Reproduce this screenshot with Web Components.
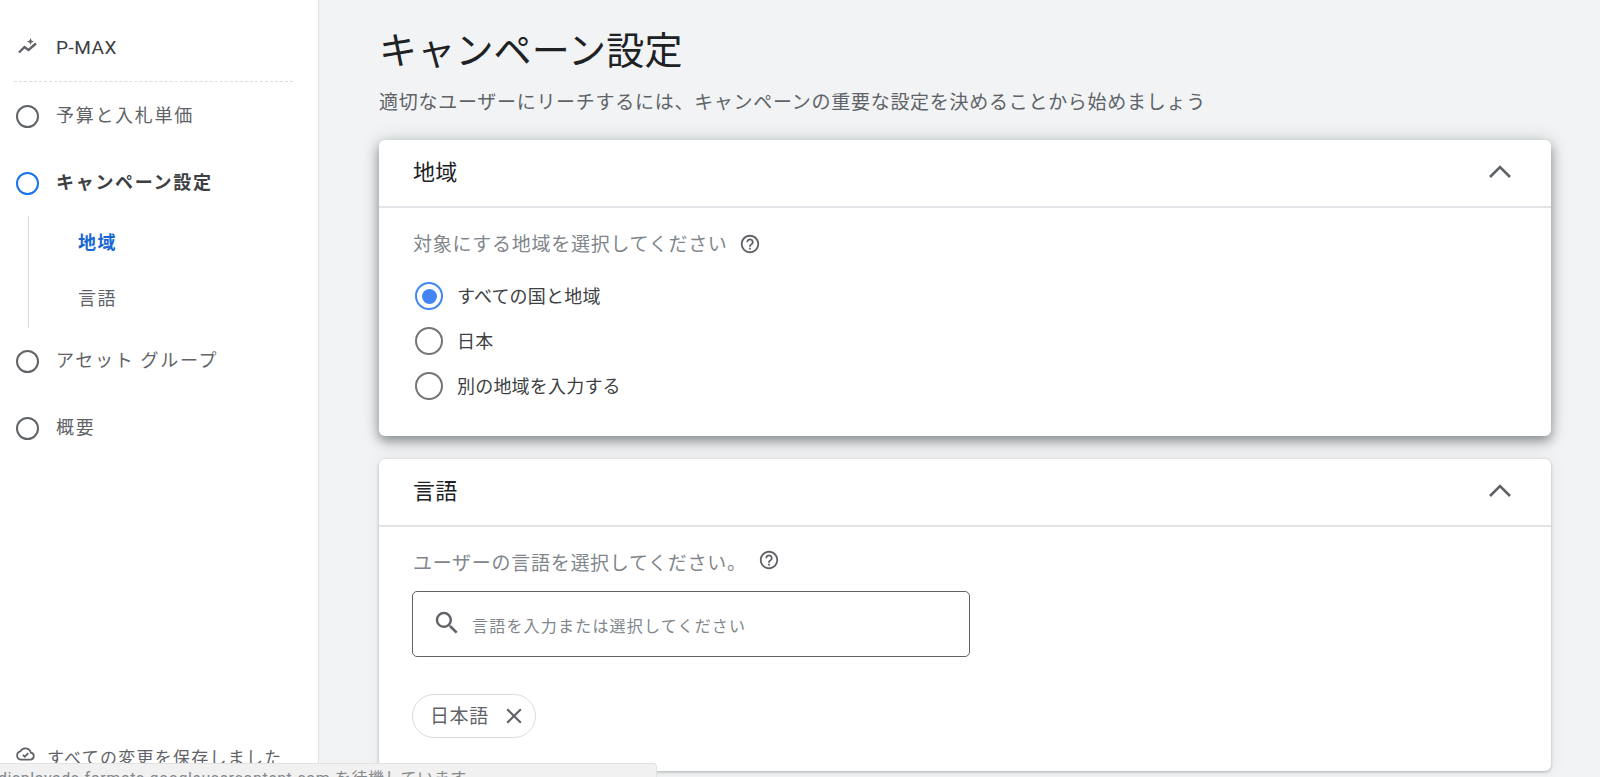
<!DOCTYPE html>
<html lang="ja">
<head>
<meta charset="utf-8">
<title>キャンペーン設定</title>
<style>
  html, body { margin: 0; height: 100%; overflow: hidden; }
  body {
    background: #f1f3f4;
    font-family: Roboto, "Noto Sans CJK JP", sans-serif;
    color: #3c4043;
    display: flex;
  }
</style>
</head>
<body>
  <campaign-sidebar>
    <nav-step slot="steps" state="idle" style="height:68px">予算と入札単価</nav-step>
    <nav-step slot="steps" state="active" style="height:66px">キャンペーン設定</nav-step>
    <sub-steps slot="steps">
      <sub-step active>地域</sub-step>
      <sub-step>言語</sub-step>
    </sub-steps>
    <nav-step slot="steps" state="idle" style="height:66px">アセット グループ</nav-step>
    <nav-step slot="steps" state="idle" style="height:68px">概要</nav-step>
  </campaign-sidebar>

  <main-panel heading="キャンペーン設定" sub="適切なユーザーにリーチするには、キャンペーンの重要な設定を決めることから始めましょう">
    <settings-card heading="地域" raised style="height:296px">
      <field-label>対象にする地域を選択してください</field-label>
      <radio-group>
        <radio-option checked>すべての国と地域</radio-option>
        <radio-option>日本</radio-option>
        <radio-option>別の地域を入力する</radio-option>
      </radio-group>
    </settings-card>
    <settings-card heading="言語" style="height:312px">
      <field-label style="--help-lift:6px">ユーザーの言語を選択してください。</field-label>
      <search-input placeholder="言語を入力または選択してください"></search-input>
      <remove-chip>日本語</remove-chip>
    </settings-card>
  </main-panel>

  <status-bubble>displayads-formats.googleusercontent.com を待機しています...</status-bubble>

<script>
const HELP_ICON = `<svg width="22" height="22" viewBox="0 0 24 24" fill="#5f6368"><path d="M11 18h2v-2h-2v2zm1-16C6.48 2 2 6.48 2 12s4.48 10 10 10 10-4.48 10-10S17.52 2 12 2zm0 18c-4.41 0-8-3.59-8-8s3.59-8 8-8 8 3.59 8 8-3.59 8-8 8zm0-14c-2.21 0-4 1.79-4 4h2c0-1.1.9-2 2-2s2 .9 2 2c0 2-3 1.75-3 5h2c0-2.25 3-2.5 3-5 0-2.21-1.79-4-4-4z"/></svg>`;

class CampaignSidebar extends HTMLElement {
  constructor() {
    super();
    this.attachShadow({ mode: "open" });
    this.shadowRoot.innerHTML = `
      <style>
        :host {
          display: flex;
          flex-direction: column;
          width: 319px;
          flex: none;
          height: 777px;
          box-sizing: border-box;
          background: #fff;
          border-right: 1px solid #dfe1e5;
        }
        .brand {
          display: flex;
          align-items: center;
          height: 81px;
          padding: 13px 0 0 16px;
          box-sizing: border-box;
          font-size: 19px;
          color: #3c4043;
          letter-spacing: .5px;
        }
        .brand svg { margin-right: 16px; }
        .rule { margin: 0 25px 0 14px; border-top: 1px dashed #dadce0; }
        .steps { flex: 1; }
        .saved {
          display: flex;
          align-items: center;
          padding: 0 0 7px 15px;
          font-size: 17px;
          letter-spacing: 1.25px;
          color: #5f6368;
        }
        .saved svg { margin: 0 11px 6px 0; }
      </style>
      <div class="brand">
        <svg width="24" height="24" viewBox="0 0 24 24" fill="none" stroke="#5f6368" stroke-width="2.4">
          <path d="M3 17.5l5.5-5.5 4 3 7.5-6.5"/>
          <path d="M14.5 3l1 2.5 2.5 1-2.5 1-1 2.5-1-2.5-2.5-1 2.5-1z" fill="#5f6368" stroke="none"/>
        </svg>
        P-MAX
      </div>
      <div class="rule"></div>
      <div class="steps"><slot name="steps"></slot></div>
      <div class="saved">
        <svg width="21" height="21" viewBox="0 0 24 24" fill="none" stroke="#5f6368" stroke-width="2">
          <path d="M6.5 19h11a4 4 0 0 0 .6-7.95A6.5 6.5 0 0 0 6 9.6 4.8 4.8 0 0 0 6.5 19z"/>
          <path d="M9 13.5l2.2 2.2 4-4"/>
        </svg>
        すべての変更を保存しました
      </div>`;
  }
}

class NavStep extends HTMLElement {
  constructor() {
    super();
    this.attachShadow({ mode: "open" });
    this.shadowRoot.innerHTML = `
      <style>
        :host {
          display: flex;
          align-items: center;
          padding-left: 16px;
          font-size: 18px;
          letter-spacing: 1.7px;
          color: #5f6368;
        }
        :host([state="active"]) { color: #3c4043; font-weight: 700; letter-spacing: 1.7px; }
        .dot {
          width: 23px;
          height: 23px;
          box-sizing: border-box;
          border: 2px solid #5f6368;
          border-radius: 50%;
          margin-right: 17px;
          flex: none;
        }
        :host([state="active"]) .dot { border-color: #1a73e8; }
        .t { padding-bottom: 4px; }
      </style>
      <span class="dot"></span><span class="t"><slot></slot></span>`;
  }
}

class SubSteps extends HTMLElement {
  constructor() {
    super();
    this.attachShadow({ mode: "open" });
    this.shadowRoot.innerHTML = `
      <style>
        :host {
          display: block;
          margin-left: 28px;
          border-left: 1px solid #dadce0;
        }
      </style>
      <slot></slot>`;
  }
}

class SubStep extends HTMLElement {
  constructor() {
    super();
    this.attachShadow({ mode: "open" });
    this.shadowRoot.innerHTML = `
      <style>
        :host {
          display: flex;
          align-items: center;
          height: 56px;
          padding-left: 49px;
          font-size: 18px;
          letter-spacing: 1.5px;
          color: #5f6368;
        }
        :host([active]) { color: #1967d2; font-weight: 700; }
        .t { padding-bottom: 6px; }
      </style>
      <span class="t"><slot></slot></span>`;
  }
}

class MainPanel extends HTMLElement {
  constructor() {
    super();
    this.attachShadow({ mode: "open" });
    this.shadowRoot.innerHTML = `
      <style>
        :host { display: block; flex: 1; padding: 0 49px 0 60px; min-width: 0; }
        h1 {
          margin: 0;
          padding-top: 27px;
          font-size: 38px;
          line-height: 48px;
          letter-spacing: .2px;
          font-weight: 400;
          color: #202124;
        }
        p {
          margin: 0;
          padding-top: 16px;
          font-size: 19px;
          line-height: 24px;
          letter-spacing: .72px;
          color: #5f6368;
        }
        .cards { display: flex; flex-direction: column; gap: 23px; padding-top: 25px; }
      </style>
      <h1></h1>
      <p></p>
      <div class="cards"><slot></slot></div>`;
  }

  connectedCallback() {
    this.shadowRoot.querySelector("h1").textContent = this.getAttribute("heading");
    this.shadowRoot.querySelector("p").textContent = this.getAttribute("sub");
  }
}

class SettingsCard extends HTMLElement {
  constructor() {
    super();
    this.attachShadow({ mode: "open" });
    this.shadowRoot.innerHTML = `
      <style>
        :host {
          display: block;
          box-sizing: border-box;
          background: #fff;
          border-radius: 6px;
          box-shadow: 0 1px 3px rgba(60,64,67,.35), 0 0 16px rgba(60,64,67,.08);
        }
        :host([raised]) { box-shadow: 0 5px 12px rgba(60,64,67,.55), 0 0 20px rgba(60,64,67,.14); }
        header {
          display: flex;
          align-items: center;
          justify-content: space-between;
          height: 68px;
          box-sizing: border-box;
          padding: 0 39px 0 34px;
          border-bottom: 2px solid #e3e4e8;
          font-size: 22px;
          letter-spacing: .2px;
          color: #202124;
        }
        .title { padding-bottom: 7px; }
        svg { margin-bottom: 2px; }
        .body { padding: 20px 34px 0; }
      </style>
      <header>
        <span class="title"></span>
        <svg width="24" height="16" viewBox="0 0 24 16" fill="none" stroke="#5f6368" stroke-width="2.6"><path d="M2 13l10-10 10 10"/></svg>
      </header>
      <div class="body"><slot></slot></div>`;
  }

  connectedCallback() {
    this.shadowRoot.querySelector(".title").textContent = this.getAttribute("heading");
  }
}

class FieldLabel extends HTMLElement {
  constructor() {
    super();
    this.attachShadow({ mode: "open" });
    this.shadowRoot.innerHTML = `
      <style>
        :host {
          display: flex;
          align-items: center;
          height: 32px;
          font-size: 19px;
          letter-spacing: .72px;
          color: #80868b;
        }
        .t { padding-bottom: 4px; }
        .help { display: inline-flex; margin-left: 11px; padding-bottom: var(--help-lift, 0); }
      </style>
      <span class="t"><slot></slot></span><span class="help">${HELP_ICON}</span>`;
  }
}

class RadioGroup extends HTMLElement {
  constructor() {
    super();
    this.attachShadow({ mode: "open" });
    this.shadowRoot.innerHTML = `
      <style>:host { display: flex; flex-direction: column; gap: 17px; padding: 22px 0 0 2px; }</style>
      <slot></slot>`;
  }
}

class RadioOption extends HTMLElement {
  constructor() {
    super();
    this.attachShadow({ mode: "open" });
    this.shadowRoot.innerHTML = `
      <style>
        :host {
          display: flex;
          align-items: center;
          height: 28px;
          font-size: 18px;
          letter-spacing: .2px;
          color: #3c4043;
        }
        .ring {
          width: 28px;
          height: 28px;
          box-sizing: border-box;
          border: 2.5px solid #757575;
          border-radius: 50%;
          margin-right: 14px;
          flex: none;
          display: flex;
          align-items: center;
          justify-content: center;
        }
        :host([checked]) .ring { border-color: #4285f4; }
        :host([checked]) .ring::after {
          content: "";
          width: 15px;
          height: 15px;
          border-radius: 50%;
          background: #4285f4;
        }
        .t { padding-bottom: 3px; }
      </style>
      <span class="ring"></span><span class="t"><slot></slot></span>`;
  }
}

class SearchInput extends HTMLElement {
  constructor() {
    super();
    this.attachShadow({ mode: "open" });
    this.shadowRoot.innerHTML = `
      <style>
        :host {
          display: flex;
          align-items: center;
          width: 558px;
          height: 66px;
          box-sizing: border-box;
          margin: 12px 0 0 -1px;
          padding-left: 19px;
          border: 1.5px solid #5f6368;
          border-radius: 5px;
          font-size: 16px;
          letter-spacing: 1.2px;
          color: #80868b;
        }
        svg { margin-right: 10px; flex: none; margin-bottom: 2px; }
        .ph { padding-top: 2px; }
      </style>
      <svg width="30" height="30" viewBox="0 0 24 24" fill="#5f6368"><path d="M15.5 14h-.79l-.28-.27A6.47 6.47 0 0 0 16 9.5 6.5 6.5 0 1 0 9.5 16c1.61 0 3.09-.59 4.23-1.57l.27.28v.79l5 4.99L20.49 19l-4.99-5zm-6 0C7.01 14 5 11.99 5 9.5S7.01 5 9.5 5 14 7.01 14 9.5 11.99 14 9.5 14z"/></svg>
      <span class="ph"></span>`;
  }

  connectedCallback() {
    this.shadowRoot.querySelector(".ph").textContent = this.getAttribute("placeholder");
  }
}

class RemoveChip extends HTMLElement {
  constructor() {
    super();
    this.attachShadow({ mode: "open" });
    this.shadowRoot.innerHTML = `
      <style>
        :host {
          display: inline-flex;
          align-items: center;
          height: 44px;
          box-sizing: border-box;
          margin: 37px 0 0 -1px;
          padding: 0 8px 0 17px;
          border: 1px solid #dadce0;
          border-radius: 22px;
          font-size: 19px;
          letter-spacing: .6px;
          color: #5f6368;
        }
        .t { padding-bottom: 4px; }
        svg { margin-left: 12px; }
      </style>
      <span class="t"><slot></slot></span>
      <svg width="26" height="26" viewBox="0 0 24 24" fill="#5f6368"><path d="M19 6.41 17.59 5 12 10.59 6.41 5 5 6.41 10.59 12 5 17.59 6.41 19 12 13.41 17.59 19 19 17.59 13.41 12z"/></svg>`;
  }
}

// browser status bubble, lies over the page at the bottom edge
class StatusBubble extends HTMLElement {
  constructor() {
    super();
    this.attachShadow({ mode: "open" });
    this.shadowRoot.innerHTML = `
      <style>
        :host {
          position: absolute;
          left: 0;
          bottom: 0;
          width: 657px;
          height: 14px;
          overflow: hidden;
          box-sizing: border-box;
          background: #f1f1f1;
          border: 1px solid #e2e2e2;
          border-bottom: 0;
          border-left: 0;
          border-top-right-radius: 4px;
          font-size: 16px;
          line-height: 20px;
          letter-spacing: .55px;
          color: #85888c;
          white-space: nowrap;
        }
        div { margin: 5px 0 0 -2px; }
      </style>
      <div><slot></slot></div>`;
  }
}

customElements.define("campaign-sidebar", CampaignSidebar);
customElements.define("nav-step", NavStep);
customElements.define("sub-steps", SubSteps);
customElements.define("sub-step", SubStep);
customElements.define("main-panel", MainPanel);
customElements.define("settings-card", SettingsCard);
customElements.define("field-label", FieldLabel);
customElements.define("radio-group", RadioGroup);
customElements.define("radio-option", RadioOption);
customElements.define("search-input", SearchInput);
customElements.define("remove-chip", RemoveChip);
customElements.define("status-bubble", StatusBubble);
</script>
</body>
</html>
